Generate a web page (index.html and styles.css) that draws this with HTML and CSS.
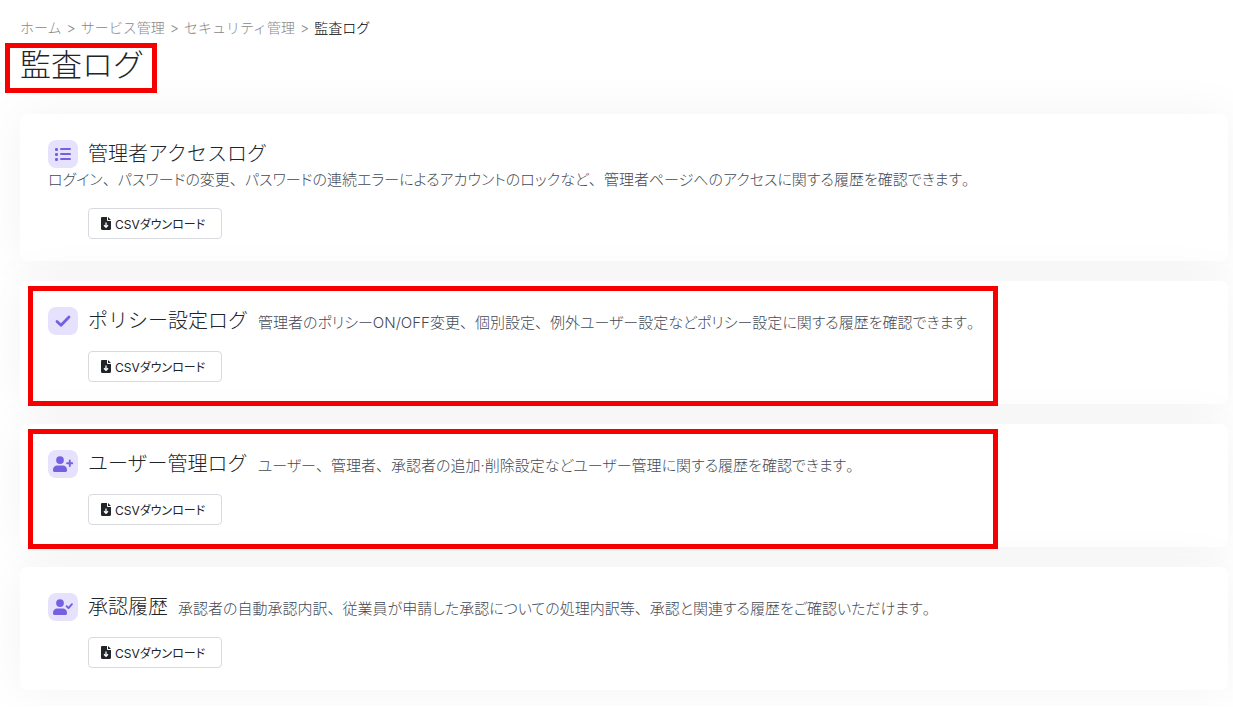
FILE: index.html
```html
<!DOCTYPE html>
<html lang="ja">
<head>
  <meta charset="UTF-8" />
  <meta name="viewport" content="width=device-width, initial-scale=1.0" />
  <title>監査ログ</title>
  <link rel="stylesheet" href="styles.css">
</head>
<body>

  <!-- shared icons -->
  <svg class="sprite" aria-hidden="true">
    <symbol id="icon-list" viewBox="0 0 16 14">
      <rect x="0" y="1" width="3" height="3" rx="1" />
      <rect x="0" y="6" width="3" height="3" rx="1" />
      <rect x="0" y="11" width="3" height="3" rx="1" />
      <rect x="5" y="1" width="11" height="2" rx="1" />
      <rect x="5" y="6" width="11" height="2" rx="1" />
      <rect x="5" y="11" width="11" height="2" rx="1" />
    </symbol>
    <symbol id="icon-check" viewBox="0 0 16 14">
      <path d="M2 7.4 6 11.2 14 3" fill="none" stroke="currentColor" stroke-width="2.8" stroke-linecap="round" stroke-linejoin="round" />
    </symbol>
    <symbol id="icon-user-plus" viewBox="0 0 640 512">
      <circle cx="224" cy="128" r="124" />
      <path d="M136 304h176c75 0 136 61 136 136v24c0 26-22 48-48 48H48c-26 0-48-22-48-48v-24c0-75 61-136 136-136z" />
      <path d="M538 144v176M450 232h176" fill="none" stroke="currentColor" stroke-width="60" stroke-linecap="round" />
    </symbol>
    <symbol id="icon-user-check" viewBox="0 0 640 512">
      <circle cx="224" cy="128" r="124" />
      <path d="M136 304h176c75 0 136 61 136 136v24c0 26-22 48-48 48H48c-26 0-48-22-48-48v-24c0-75 61-136 136-136z" />
      <path d="M436 232 496 290 606 166" fill="none" stroke="currentColor" stroke-width="60" stroke-linecap="round" stroke-linejoin="round" />
    </symbol>
    <symbol id="icon-download" viewBox="0 0 10 13">
      <path d="M1.2 0H6v3.2c0 .4.3.8.8.8H10v7.8c0 .7-.5 1.2-1.2 1.2H1.2C.5 13 0 12.500 0 11.800V1.200C0 .5.5 0 1.200 0zM7 0l3 3H7z" />
      <path d="M5 5.500v4.500M3 8.300l2 2 2-2" fill="none" stroke="#fff" stroke-width="1.300" />
    </symbol>
  </svg>

  <header>
    <nav aria-label="パンくずリスト">
      <ol class="breadcrumb">
        <li><a href="#">ホーム</a></li>
        <li><a href="#">サービス管理</a></li>
        <li><a href="#">セキュリティ管理</a></li>
        <li aria-current="page">監査ログ</li>
      </ol>
    </nav>
    <h1 class="page-title">監査ログ</h1>
  </header>

  <main>
    <section class="card">
      <div class="card-head">
        <span class="badge"><svg class="icon"><use href="#icon-list" /></svg></span>
        <h2>管理者アクセスログ</h2>
        <p>ログイン<span>、</span>パスワードの変更<span>、</span>パスワードの連続エラーによるアカウントのロックなど<span>、</span>管理者ページへのアクセスに関する履歴を確認できます<span>。</span></p>
      </div>
      <button type="button" class="btn"><svg class="icon-file"><use href="#icon-download" /></svg>CSVダウンロード</button>
    </section>

    <section class="card marked">
      <div class="card-head">
        <span class="badge"><svg class="icon"><use href="#icon-check" /></svg></span>
        <h2>ポリシー設定ログ</h2>
        <p>管理者のポリシーON/OFF変更<span>、</span>個別設定<span>、</span>例外ユーザー設定などポリシー設定に関する履歴を確認できます<span>。</span></p>
      </div>
      <button type="button" class="btn"><svg class="icon-file"><use href="#icon-download" /></svg>CSVダウンロード</button>
    </section>

    <section class="card marked">
      <div class="card-head">
        <span class="badge"><svg class="icon icon-user"><use href="#icon-user-plus" /></svg></span>
        <h2>ユーザー管理ログ</h2>
        <p>ユーザー<span>、</span>管理者<span>、</span>承認者の追加·削除設定などユーザー管理に関する履歴を確認できます<span>。</span></p>
      </div>
      <button type="button" class="btn"><svg class="icon-file"><use href="#icon-download" /></svg>CSVダウンロード</button>
    </section>

    <section class="card">
      <div class="card-head">
        <span class="badge"><svg class="icon icon-user"><use href="#icon-user-check" /></svg></span>
        <h2>承認履歴</h2>
        <p>承認者の自動承認内訳<span>、</span>従業員が申請した承認についての処理内訳等<span>、</span>承認と関連する履歴をご確認いただけます<span>。</span></p>
      </div>
      <button type="button" class="btn"><svg class="icon-file"><use href="#icon-download" /></svg>CSVダウンロード</button>
    </section>
  </main>

</body>
</html>
```

FILE: styles.css
```css
*,
*::before,
*::after {
  box-sizing: border-box;
}

body {
  margin: 0;
  padding: 16px 5px 16px 20px;
  background-color: #fff;
  color: #212529;
  font-family: Inter, "Noto Sans CJK JP", sans-serif;
  font-size: 14px;
  font-weight: 300;
}

.sprite {
  display: none;
}

.breadcrumb {
  display: flex;
  margin: 0;
  padding: 0;
  list-style: none;
  color: #000;
  line-height: 24px;
}

.breadcrumb li + li::before {
  content: ">";
  margin: 0 5px;
  color: #888;
}

.breadcrumb a {
  color: #888;
  text-decoration: none;
}

.page-title {
  position: relative;
  width: fit-content;
  margin: 0 0 24px;
  font-size: 31px;
  font-weight: 300;
  line-height: 50px;
}

/* red highlight frames */
.page-title::after,
.marked::after {
  content: "";
  position: absolute;
  border: 5px solid #f60000;
  pointer-events: none;
}

.page-title::after {
  top: 3px;
  right: -13px;
  bottom: -3px;
  left: -15px;
}

.marked::after {
  top: 5px;
  bottom: -2px;
  left: 8px;
  width: 970px;
}

main {
  display: flex;
  flex-direction: column;
  gap: 20px;
}

.card {
  position: relative;
  padding: 26px 28px 22px;
  background-color: #fff;
  border-radius: 8px;
  box-shadow: 0 0 50px rgba(0, 0, 0, 0.05);
}

.card-head {
  display: flex;
  flex-wrap: wrap;
  align-items: baseline;
  column-gap: 10px;
}

.badge {
  display: flex;
  align-self: center;
  align-items: center;
  justify-content: center;
  width: 30px;
  height: 28px;
  border-radius: 8px;
  background-color: #e6e1fd;
  color: #7460e0;
}

.icon {
  width: 16px;
  height: 14px;
  fill: currentColor;
}

.icon-user {
  width: 20px;
  height: 16px;
}

h2 {
  margin: 0;
  font-size: 20px;
  font-weight: 300;
  line-height: 28px;
}

.card-head p {
  margin: 0;
  color: #444a55;
  font-size: 15px;
  line-height: 24px;
  font-feature-settings: "palt";
}

/* punctuation keeps its full width */
.card-head p span {
  font-feature-settings: normal;
}

.btn {
  display: flex;
  align-items: center;
  gap: 4px;
  height: 31px;
  margin: 16px 0 0 40px;
  padding: 0 16px 0 12px;
  border: 1px solid #d8dadf;
  border-radius: 4px;
  background-color: #fff;
  color: #212529;
  font-family: inherit;
  font-size: 12px;
  font-weight: 400;
  font-feature-settings: "palt";
}

.icon-file {
  width: 10px;
  height: 13px;
  fill: currentColor;
}
```
